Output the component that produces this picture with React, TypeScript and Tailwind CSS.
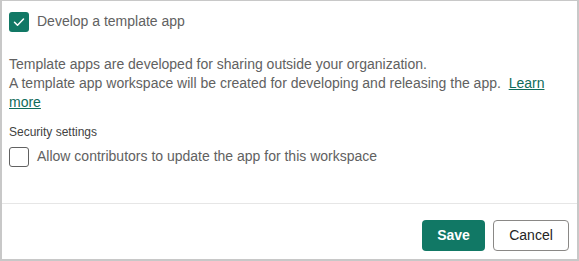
import { useState } from "react";

const font = { fontFamily: "'Segoe UI', 'Liberation Sans', sans-serif" };

function Check({ checked, onToggle }: { checked: boolean; onToggle: () => void }) {
  return (
    <button
      type="button"
      onClick={onToggle}
      className={
        checked
          ? "flex h-5 w-5 shrink-0 items-center justify-center rounded-[3px] bg-[#117865]"
          : "flex h-5 w-5 shrink-0 items-center justify-center rounded-[3px] border border-[#616161] bg-white"
      }
    >
      {checked && (
        <svg width="14" height="14" viewBox="0 0 14 14" fill="none">
          <path d="M2.5 7.3l3 3L11.5 4" stroke="white" strokeWidth="1.5" strokeLinecap="round" strokeLinejoin="round" />
        </svg>
      )}
    </button>
  );
}

export default function App() {
  const [template, setTemplate] = useState(true);
  const [allow, setAllow] = useState(false);

  return (
    <div
      style={font}
      className="flex h-[261px] w-[579px] flex-col border-x-2 border-t border-b-2 border-[#c8c8c8] bg-white"
    >
      <div className="flex-1 px-[7px] pt-[10px]">
        <label className="flex items-center gap-2 text-[14px] text-[#616161]">
          <Check checked={template} onToggle={() => setTemplate((v) => !v)} />
          Develop a template app
        </label>

        <p className="mt-[23px] text-[14px] leading-[19px] text-[#616161]">
          Template apps are developed for sharing outside your organization.
          <br />
          A template app workspace will be created for developing and releasing the app.{"\u00a0 "}
          <a href="#" className="text-[#0f6c5a] underline">
            Learn more
          </a>
        </p>

        <p className="mt-[11px] text-[12px] text-[#424242]">Security settings</p>
        <label className="mt-[5px] flex items-center gap-2 text-[14px] text-[#616161]">
          <Check checked={allow} onToggle={() => setAllow((v) => !v)} />
          Allow contributors to update the app for this workspace
        </label>
      </div>

      <div className="flex h-[56px] items-start justify-end gap-2 border-t border-[#e6e6e6] pt-[16px] pr-[8px]">
        <button
          type="button"
          className="h-[31px] w-[63px] rounded-[4px] bg-[#117865] text-[14px] font-bold text-white"
        >
          Save
        </button>
        <button
          type="button"
          className="h-[31px] w-[76px] rounded-[4px] border border-[#8a8886] bg-white text-[14px] text-[#242424]"
        >
          Cancel
        </button>
      </div>
    </div>
  );
}
